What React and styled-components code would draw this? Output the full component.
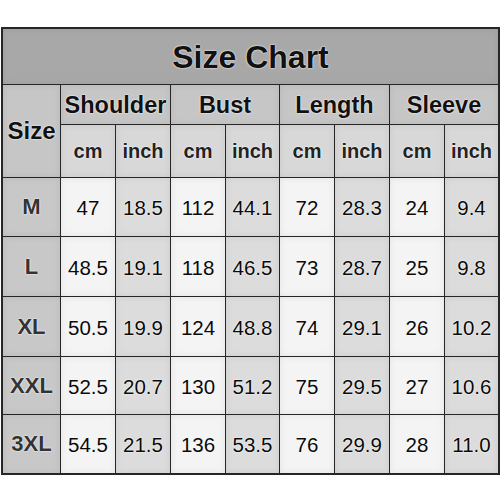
import React from "react";
import styled, { createGlobalStyle } from "styled-components";

const Global = createGlobalStyle`
  html, body { margin: 0; padding: 0; background: #fff; }
  body { font-family: "Liberation Sans", Arial, sans-serif; }
`;

const Chart = styled.div`
  margin: 27px 0 0 1px;
  width: max-content;
  display: grid;
  grid-template-columns: 57px 54px 54px 54px 53px 54px 54px 54px 53px;
  grid-template-rows: 55px 39px 52px 58px 59px 59px 57px 58px;
  gap: 1px;
  background: #262626;
  border: 2px solid #262626;
`;

const Cell = styled.div`
  display: flex;
  align-items: center;
  justify-content: center;
  box-shadow: inset 0 0 7px rgba(0, 0, 0, 0.07);
  text-shadow: 0 0 1px #fff, 0 0 2px #fff;
`;

const Title = styled(Cell)`
  grid-column: 1 / -1;
  background: #a8a8a8;
  font-size: 32px;
  font-weight: 700;
  color: #111;
  padding-top: 2px;
`;

const SizeHead = styled(Cell)`
  grid-row: 2 / span 2;
  background: #c6c6c6;
  font-size: 24px;
  font-weight: 700;
  color: #111;
`;

const Group = styled(Cell)`
  grid-column: span 2;
  background: #c6c6c6;
  font-size: 23.5px;
  font-weight: 700;
  color: #111;
  padding-top: 1px;
`;

const Unit = styled(Cell)`
  background: #d8d8d8;
  font-size: 20px;
  font-weight: 700;
  color: #222;
`;

const SizeLabel = styled(Cell)`
  background: #c8c8c8;
  font-size: 22px;
  font-weight: 700;
  color: #333;
`;

const Value = styled(Cell)`
  background: ${(p) => (p.$inch ? "#dcdcdc" : "#f4f4f4")};
  font-size: 20.5px;
  color: #0a0a0a;
  padding-top: 2px;
`;

const groups = ["Shoulder", "Bust", "Length", "Sleeve"];

const rows = [
  ["M", "47", "18.5", "112", "44.1", "72", "28.3", "24", "9.4"],
  ["L", "48.5", "19.1", "118", "46.5", "73", "28.7", "25", "9.8"],
  ["XL", "50.5", "19.9", "124", "48.8", "74", "29.1", "26", "10.2"],
  ["XXL", "52.5", "20.7", "130", "51.2", "75", "29.5", "27", "10.6"],
  ["3XL", "54.5", "21.5", "136", "53.5", "76", "29.9", "28", "11.0"],
];

export default function App() {
  return (
    <>
      <Global />
      <Chart>
        <Title>Size Chart</Title>
        <SizeHead>Size</SizeHead>
        {groups.map((g) => (
          <Group key={g}>{g}</Group>
        ))}
        {groups.map((g) => (
          <React.Fragment key={g + "u"}>
            <Unit>cm</Unit>
            <Unit>inch</Unit>
          </React.Fragment>
        ))}
        {rows.map((r) => (
          <React.Fragment key={r[0]}>
            <SizeLabel>{r[0]}</SizeLabel>
            {r.slice(1).map((v, i) => (
              <Value key={i} $inch={i % 2 === 1}>
                {v}
              </Value>
            ))}
          </React.Fragment>
        ))}
      </Chart>
    </>
  );
}
